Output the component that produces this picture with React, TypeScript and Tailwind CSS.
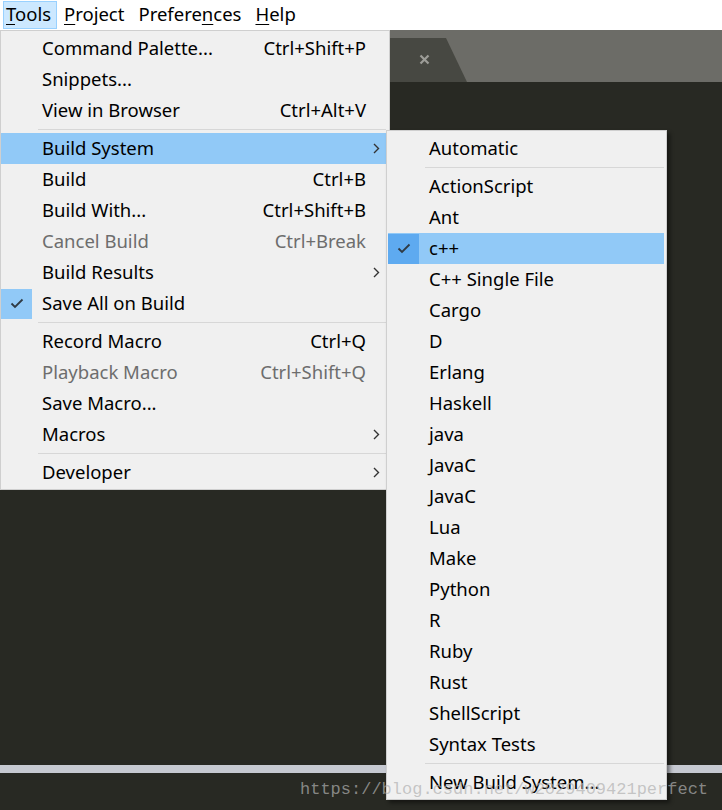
import React from "react";

type Item =
  | "sep"
  | {
      label: string;
      shortcut?: string;
      disabled?: boolean;
      arrow?: boolean;
      checked?: boolean;
      active?: boolean;
    };

const mainItems: Item[] = [
  { label: "Command Palette...", shortcut: "Ctrl+Shift+P" },
  { label: "Snippets..." },
  { label: "View in Browser", shortcut: "Ctrl+Alt+V" },
  "sep",
  { label: "Build System", arrow: true, active: true },
  { label: "Build", shortcut: "Ctrl+B" },
  { label: "Build With...", shortcut: "Ctrl+Shift+B" },
  { label: "Cancel Build", shortcut: "Ctrl+Break", disabled: true },
  { label: "Build Results", arrow: true },
  { label: "Save All on Build", checked: true },
  "sep",
  { label: "Record Macro", shortcut: "Ctrl+Q" },
  { label: "Playback Macro", shortcut: "Ctrl+Shift+Q", disabled: true },
  { label: "Save Macro..." },
  { label: "Macros", arrow: true },
  "sep",
  { label: "Developer", arrow: true },
];

const subItems: Item[] = [
  { label: "Automatic" },
  "sep",
  { label: "ActionScript" },
  { label: "Ant" },
  { label: "c++", checked: true, active: true },
  { label: "C++ Single File" },
  { label: "Cargo" },
  { label: "D" },
  { label: "Erlang" },
  { label: "Haskell" },
  { label: "java" },
  { label: "JavaC" },
  { label: "JavaC" },
  { label: "Lua" },
  { label: "Make" },
  { label: "Python" },
  { label: "R" },
  { label: "Ruby" },
  { label: "Rust" },
  { label: "ShellScript" },
  { label: "Syntax Tests" },
  "sep",
  { label: "New Build System..." },
];

const Check = () => (
  <svg width="14" height="11" viewBox="0 0 14 11">
    <polyline points="1.5,5.5 5,9 12.5,1.5" fill="none" stroke="#2f3a44" strokeWidth="1.8" />
  </svg>
);

const Chevron = () => (
  <svg width="7" height="11" viewBox="0 0 7 11">
    <polyline points="1,1 5.5,5.5 1,10" fill="none" stroke="#333" strokeWidth="1.4" />
  </svg>
);

function Row({ item, sub }: { item: Exclude<Item, "sep">; sub?: boolean }) {
  const rowCls = item.active ? "bg-[#91c9f7]" : "";
  const boxCls = item.checked ? (item.active ? "bg-[#5eaaf0]" : "bg-[#91c9f7]") : "";
  return (
    <div
      className={`flex h-[31px] items-center ${sub ? "ml-[1px] mr-[2px]" : "mr-[3px]"} ${rowCls}`}
    >
      <div className={`flex h-[30px] w-[31px] shrink-0 items-center justify-center ${boxCls}`}>
        {item.checked && <Check />}
      </div>
      <span
        className={`ml-[10px] mb-[1px] flex-1 whitespace-nowrap ${item.disabled ? "text-[#6d6d6d]" : "text-black"}`}
      >
        {item.label}
      </span>
      {!sub && (
        <>
          <span
            className={`mb-[1px] whitespace-nowrap ${item.disabled ? "text-[#6d6d6d]" : "text-black"}`}
          >
            {item.shortcut ?? ""}
          </span>
          <span className="flex w-[20px] shrink-0 items-center pl-[7px]">
            {item.arrow && <Chevron />}
          </span>
        </>
      )}
    </div>
  );
}

function Sep({ sub }: { sub?: boolean }) {
  return (
    <div className={`flex h-[7px] items-center ${sub ? "ml-[38px] mr-[2px]" : "ml-[37px] mr-[3px]"}`}>
      <div className="h-px w-full bg-[#d7d7d7]" />
    </div>
  );
}

export default function App() {
  const font = { fontFamily: '"Noto Sans", "Open Sans", sans-serif' };
  return (
    <div
      className="relative flex h-[810px] w-[722px] flex-col overflow-hidden bg-[#282923] text-[18.5px] leading-none"
      style={font}
    >
      {/* menu bar */}
      <div className="flex h-[30px] shrink-0 items-center bg-white pl-[3px] text-black">
        <div className="flex h-[28px] w-[54px] items-center border border-[#99d1ff] bg-[#cce8ff] px-[2px] pb-[1px]">
          <span>
            <span className="underline underline-offset-[3px]">T</span>ools
          </span>
        </div>
        <span className="ml-[7px] mb-[1px]">
          <span className="underline underline-offset-[3px]">P</span>roject
        </span>
        <span className="ml-[14px] mb-[1px]">
          Prefere<span className="underline underline-offset-[3px]">n</span>ces
        </span>
        <span className="ml-[14px] mb-[1px]">
          <span className="underline underline-offset-[3px]">H</span>elp
        </span>
      </div>

      {/* tab bar */}
      <div className="flex h-[52px] shrink-0 items-end bg-[#6c6c67]">
        <div className="relative ml-[300px] h-[44px] w-[167px] bg-[#474842] [clip-path:polygon(0_0,146px_0,167px_100%,0_100%)]">
          <svg className="absolute left-[119px] top-[16px]" width="11" height="11" viewBox="0 0 11 11">
            <path d="M1.5 1.5 L9.5 9.5 M9.5 1.5 L1.5 9.5" stroke="#9d9d98" strokeWidth="2.2" />
          </svg>
        </div>
      </div>

      {/* editor */}
      <div className="flex-1 bg-[#282923]" />
      <div className="h-[8px] shrink-0 bg-[#c6c9d1]" />
      <div className="h-[37px] shrink-0 bg-[#282923]" />

      {/* main menu */}
      <div className="absolute left-0 top-[30px] w-[390px] border border-[#cfcfcf] bg-[#f0f0f0] pb-[1px] pt-[2px]">
        {mainItems.map((it, i) => (it === "sep" ? <Sep key={i} /> : <Row key={i} item={it} />))}
      </div>

      {/* submenu */}
      <div className="absolute left-[386px] top-[130px] w-[281px] border border-[#cfcfcf] bg-[#f0f0f0] pb-[1px] pt-[2px] shadow-[3px_3px_4px_rgba(0,0,0,0.45)]">
        {subItems.map((it, i) =>
          it === "sep" ? <Sep key={i} sub /> : <Row key={i} item={it} sub />
        )}
      </div>

      {/* watermark */}
      <div
        className="absolute left-[300px] top-[781px] whitespace-nowrap text-[17px] text-[rgba(177,177,177,0.7)]"
        style={{ fontFamily: '"Liberation Mono", monospace' }}
      >
        https://blog.csdn.net/w2029409421perfect
      </div>
    </div>
  );
}
